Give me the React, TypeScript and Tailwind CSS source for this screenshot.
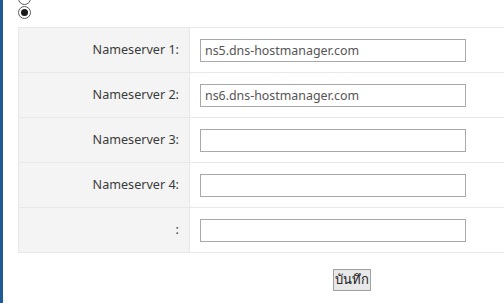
import React from 'react';

const rows = [
  { label: 'Nameserver 1:', value: 'ns5.dns-hostmanager.com' },
  { label: 'Nameserver 2:', value: 'ns6.dns-hostmanager.com' },
  { label: 'Nameserver 3:', value: '' },
  { label: 'Nameserver 4:', value: '' },
  { label: ':', value: '' },
];

const Radio = ({ checked }: { checked?: boolean }) => (
  <span className="w-[13px] h-[13px] rounded-full border border-[#5a5a5a] bg-white flex items-center justify-center">
    {checked && <span className="w-[7px] h-[7px] rounded-full bg-[#1a1a1a]" />}
  </span>
);

const App = () => {
  return (
    <div
      className="min-h-[303px] h-[303px] overflow-hidden bg-white border-l-[3px] border-[#1f5a94] pl-[15px]"
      style={{ fontFamily: '"Noto Sans", "Open Sans", sans-serif' }}
    >
      <div className="flex flex-col gap-[1px] mt-[-8px]">
        <Radio />
        <Radio checked />
      </div>

      <table className="mt-[8px] w-[500px] border-collapse text-[12.6px]">
        <tbody>
          {rows.map((row, i) => (
            <tr key={i} className="h-[45px]">
              <td className="w-[171px] bg-[#f4f4f4] border border-[#e8e8e8] text-right pr-[10px] text-[#3a3a3a]">
                {row.label}
              </td>
              <td className="border border-[#e8e8e8] border-r-0 pl-[10px]">
                <input
                  type="text"
                  defaultValue={row.value}
                  className="w-[266px] h-[23px] border border-[#a9a9a9] px-[4px] text-[12.4px] text-[#555] outline-none"
                  style={{ fontFamily: '"Noto Sans", "Open Sans", sans-serif' }}
                />
              </td>
            </tr>
          ))}
        </tbody>
      </table>

      <div className="mt-[13px] pl-[315px]">
        <button
          className="h-[22px] w-[38px] bg-[#e8e8e8] border border-[#a0a0a0] text-[13px] text-[#222] leading-none"
          style={{ fontFamily: 'Tahoma, "Noto Sans", sans-serif' }}
        >
          บันทึก
        </button>
      </div>
    </div>
  );
};

export default App;
